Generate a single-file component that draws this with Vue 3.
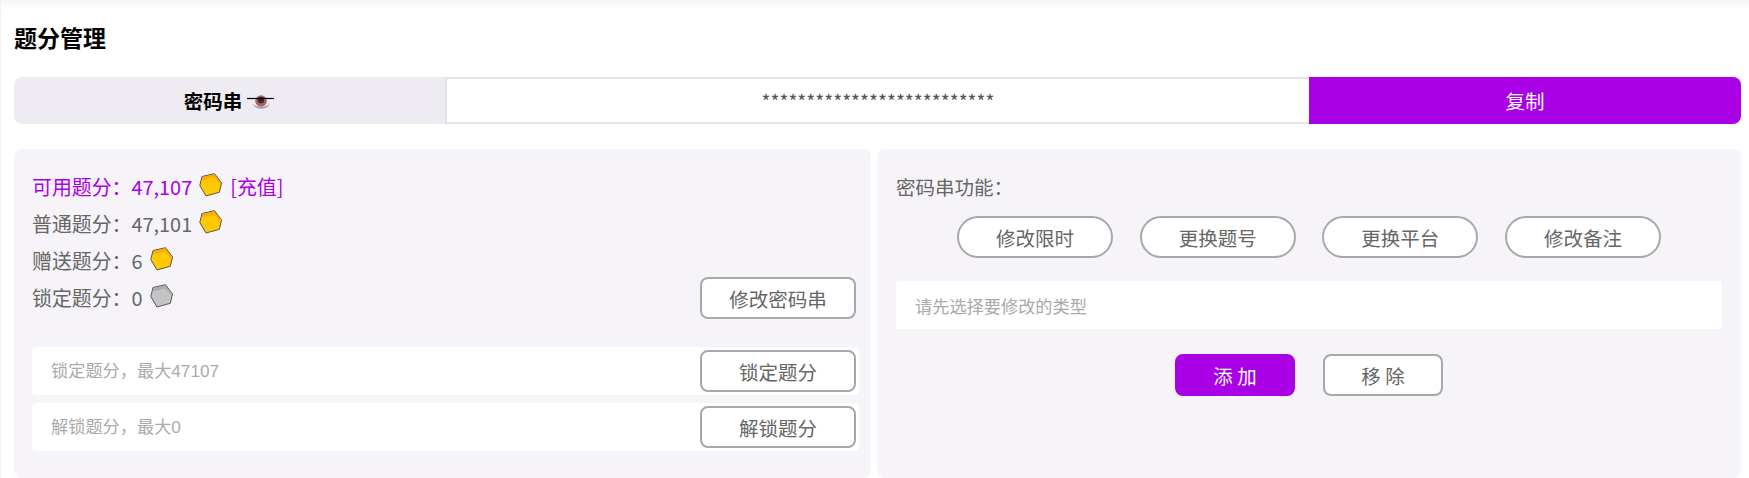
<script setup>
const rows = [
  { label: '可用题分：', value: '47,107', cls: 'hot', coin: 'gold', link: '[充值]' },
  { label: '普通题分：', value: '47,101', coin: 'gold' },
  { label: '赠送题分：', value: '6', coin: 'gold' },
  { label: '锁定题分：', value: '0', coin: 'grey' },
]
const pills = ['修改限时', '更换题号', '更换平台', '修改备注']
</script>

<template>
  <div class="page">
    <h1 class="title">题分管理</h1>

    <div class="key-row">
      <div class="key-label">
        <span>密码串</span>
        <svg class="eye" width="28" height="18" viewBox="0 0 28 18">
          <ellipse cx="14" cy="9.5" rx="9.5" ry="7.5" fill="#eee9ef" />
          <path d="M5 11C7.5 15.5 20 16.5 23 11 21 18.5 8 18.5 5 11Z" fill="#a99bc0" />
          <circle cx="14" cy="9" r="5.8" fill="#a3675f" />
          <circle cx="14" cy="8" r="3.2" fill="#4a2338" />
          <path d="M0 6.5H27" stroke="#000" stroke-width="1.2" />
        </svg>
      </div>
      <div class="key-value">**************************</div>
      <button class="copy">复制</button>
    </div>

    <div class="panels">
      <section class="panel left">
        <div class="info">
          <ul class="stats">
            <li v-for="r in rows" :key="r.label" :class="r.cls">
              <span>{{ r.label }}</span><span class="num">{{ r.value }}</span>
              <svg class="coin" width="24" height="24" viewBox="0 0 24 24">
                <g :class="r.coin">
                  <polygon class="body" points="3,3.5 15.5,0.7 22.5,10 20.3,19.3 7,23 0.8,12.5" />
                  <polygon class="band" points="3.3,3.9 15.3,1.2 22,10 21.7,11.5 15,4.5 2.6,7.5" />
                </g>
              </svg>
              <span v-if="r.link" class="link">{{ r.link }}</span>
            </li>
          </ul>
          <button class="btn">修改密码串</button>
        </div>

        <div class="field">
          <span class="ph">锁定题分，最大47107</span>
          <button class="btn">锁定题分</button>
        </div>
        <div class="field">
          <span class="ph">解锁题分，最大0</span>
          <button class="btn">解锁题分</button>
        </div>
      </section>

      <section class="panel right">
        <div class="fn-title">密码串功能：</div>
        <div class="pills">
          <button v-for="p in pills" :key="p" class="btn pill">{{ p }}</button>
        </div>
        <div class="type-field"><span class="ph">请先选择要修改的类型</span></div>
        <div class="actions">
          <button class="action add">添 加</button>
          <button class="action">移 除</button>
        </div>
      </section>
    </div>
  </div>
</template>

<style>
html, body { margin: 0; background: #fff; }
</style>

<style scoped>
.page {
  box-sizing: border-box;
  width: 1749px;
  height: 478px;
  padding: 0 8px 0 13px;
  overflow: hidden;
  border-left: 1px solid #f0f0f0;
  background: linear-gradient(#f5f5f5, #fff 10px);
  font-family: "Noto Sans CJK SC", sans-serif;
  font-size: 19.5px;
  color: #666;
}
.title {
  margin: 0;
  padding-top: 20px;
  height: 57px;
  line-height: 34px;
  font-size: 23px;
  font-weight: 700;
  color: #000;
}
.key-row {
  display: flex;
  height: 47px;
}
.key-label {
  box-sizing: border-box;
  width: 431px;
  display: flex;
  align-items: center;
  justify-content: center;
  gap: 5px;
  background: #eeebf2;
  border-radius: 8px 0 0 8px;
  color: #000;
  font-weight: 700;
}
.eye { margin-top: 1px; }
.key-value {
  box-sizing: border-box;
  width: 864px;
  display: flex;
  align-items: center;
  justify-content: center;
  border: 2px solid #e4e4e8;
  border-right: 0;
  background: #fff;
  font-size: 19.2px;
  color: #555;
}
.copy {
  width: 432px;
  border: 0;
  padding: 0;
  background: #aa00e6;
  color: #fff;
  font: inherit;
  border-radius: 0 8px 8px 0;
}
.panels {
  display: flex;
  gap: 6px;
  margin-top: 25px;
}
.panel {
  box-sizing: border-box;
  height: 329px;
  background: #f6f4f8;
  border-radius: 8px;
}
.left {
  width: 857px;
  padding: 19px 12px 0 18px;
}
.right {
  width: 864px;
  padding: 19px 19px 0;
}
.info {
  display: flex;
  justify-content: space-between;
  align-items: flex-end;
  padding-right: 3px;
  margin-bottom: 28px;
  height: 151px;
}
.stats {
  list-style: none;
  margin: 0;
  padding: 0;
  align-self: flex-start;
  font-size: 19.9px;
}
.stats li {
  display: flex;
  align-items: center;
  height: 37px;
}
.hot { color: #aa00e6; }
.coin { margin-left: 7px; margin-top: -4px; }
.link { margin-left: 7px; }
.body { stroke: #555; stroke-width: 1; stroke-linejoin: round; }
.gold .body { fill: #ffc800; }
.gold .band { fill: #fbaa00; }
.grey .body { fill: #c4c4c4; }
.grey .band { fill: #acacac; }
.btn {
  box-sizing: border-box;
  width: 156px;
  height: 42px;
  padding: 0;
  background: #fff;
  border: 2px solid #a8a8a8;
  border-radius: 8px;
  color: #666;
  font: inherit;
  flex: none;
}
.field {
  display: flex;
  align-items: center;
  justify-content: space-between;
  width: 827px;
  height: 48px;
  box-sizing: border-box;
  padding: 0 3px 0 19px;
  background: #fff;
  border-radius: 4px;
  margin-bottom: 8px;
}
.field .ph { margin-bottom: 3px; }
.ph {
  font-family: "Liberation Sans", "Noto Sans CJK SC", sans-serif;
  font-size: 17.2px;
  color: #aaa;
}
.fn-title {
  height: 37px;
  line-height: 37px;
}
.pills {
  display: flex;
  justify-content: center;
  gap: 26.6px;
  margin-top: 11px;
}
.pill {
  border-radius: 21px;
}
.type-field {
  box-sizing: border-box;
  height: 48px;
  margin-top: 23px;
  padding-left: 19px;
  display: flex;
  align-items: center;
  background: #fff;
  border-radius: 4px;
}
.actions {
  display: flex;
  justify-content: center;
  gap: 28px;
  margin-top: 25px;
}
.action {
  box-sizing: border-box;
  width: 120px;
  height: 42px;
  padding: 0;
  background: #fff;
  border: 2px solid #a8a8a8;
  border-radius: 8px;
  color: #666;
  font: inherit;
}
.add {
  background: #aa00e6;
  border-color: #aa00e6;
  color: #fff;
}
</style>
